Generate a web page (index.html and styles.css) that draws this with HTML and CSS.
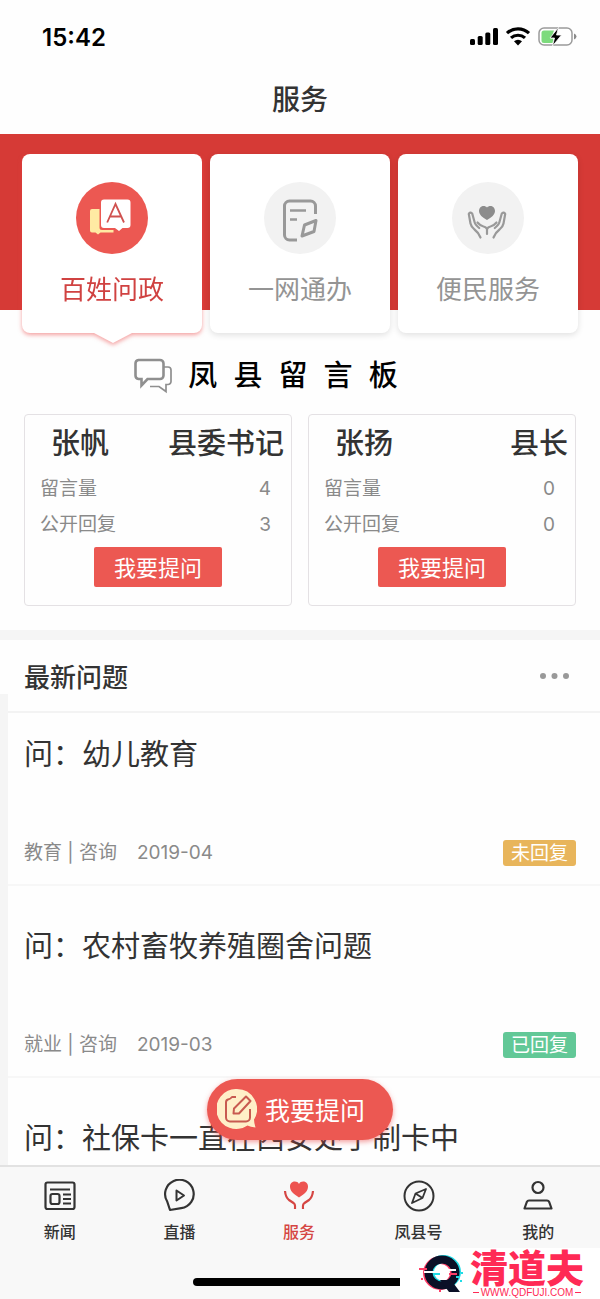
FILE: index.html
```html
<!DOCTYPE html>
<html lang="zh-CN">
<head>
<meta charset="utf-8">
<meta name="viewport" content="width=device-width, initial-scale=1">
<title>服务</title>
<link rel="stylesheet" href="styles.css">
</head>
<body>
<div class="app">
  <header class="top">
    <div class="status">
      <span class="time">15:42</span>
      <svg class="status-icons" width="108" height="22" viewBox="0 0 108 22" aria-hidden="true">
        <rect x="0" y="13" width="5" height="6" rx="1.500"/>
        <rect x="7.700" y="10" width="5" height="9" rx="1.500"/>
        <rect x="15.300" y="6.500" width="5" height="12.500" rx="1.500"/>
        <rect x="23" y="2" width="5" height="17" rx="1.500"/>
        <g fill="none" stroke="#000" stroke-width="3.200">
          <path d="M37 7.200a16 16 0 0 1 22 0"/>
          <path d="M41 11.900a10.500 10.500 0 0 1 14 0"/>
        </g>
        <path d="M44 15.300a6 6 0 0 1 8 0l-4 4.200z"/>
        <rect x="69" y="2" width="33" height="17" rx="5" fill="#fff" stroke="#9b9b9b" stroke-width="1.500"/>
        <path d="M74 4.500h10l-3 8h2.500l-1 4.500h-8.500a2.500 2.500 0 0 1-2.500-2.500v-7.500a2.500 2.500 0 0 1 2.500-2.500z" fill="#7ddb7d"/>
        <path d="M88.500 1.500l-8.500 10.500h4.500l-2 8 9-11h-5z" stroke="#fff" stroke-width=".8"/>
        <path d="M104 7.500q2.500 1 2.500 3t-2.500 3z" fill="#8a8a8a"/>
      </svg>
    </div>
    <h1 class="title">服务</h1>
  </header>

  <main class="content">
    <nav class="cards" aria-label="服务分类">
      <button class="card card-active" type="button">
        <svg class="card-icon" width="72" height="72" viewBox="0 0 72 72" aria-hidden="true">
          <circle cx="36" cy="36" r="36" fill="#ec5852"/>
          <path d="M16 27h7.500v18.500a2.500 2.500 0 0 0 2.500 2.500h11.500v2.500h-13l-2.500 2-2.500-2h-3.500a2 2 0 0 1-2-2v-19.500a2 2 0 0 1 2-2z" fill="#ffeaa3"/>
          <path d="M28 17.500h23.500a3 3 0 0 1 3 3v22.500a3 3 0 0 1-3 3h-5l-3.500 3-4-3h-11a3 3 0 0 1-3-3v-22.500a3 3 0 0 1 3-3z" fill="#fff"/>
          <path d="M31.200 40.500l8.300-18.500 8.500 18.500M34 34.500h11" fill="none" stroke="#d05250" stroke-width="1.800"/>
        </svg>
        <span>百姓问政</span>
      </button>
      <button class="card" type="button">
        <svg class="card-icon" width="72" height="72" viewBox="0 0 72 72" aria-hidden="true">
          <circle cx="36" cy="36" r="36" fill="#f2f2f2"/>
          <g fill="none" stroke="#999" stroke-width="3">
            <path d="M33 58h-7.500a5 5 0 0 1-5-5v-29a5 5 0 0 1 5-5h21a5 5 0 0 1 5 5v8"/>
            <path d="M26 28.500h16M26 37.500h7" stroke-width="2.400"/>
            <path d="M40.500 43l11.500-4.500-2 11-12 4.500z" stroke-linejoin="round" stroke-width="3"/>
          </g>
        </svg>
        <span>一网通办</span>
      </button>
      <button class="card" type="button">
        <svg class="card-icon" width="72" height="72" viewBox="0 0 72 72" aria-hidden="true">
          <circle cx="36" cy="36" r="36" fill="#f2f2f2"/>
          <path d="M35 38c-4.500-2.500-8-5.500-8-9 0-5 5.500-6.500 8-3.500 2.500-3 8-1.500 8 3.500 0 3.500-3.500 6.500-8 9z" fill="#8c8c8c"/>
          <g fill="none" stroke="#999" stroke-width="2.200" stroke-linejoin="round" stroke-linecap="round">
            <path d="M28.500 55.500q-2-5-6-8-3.500-3-4-6l-1.700-9.500q1.200-2.500 3.400-.5l2.500 9q.5 2 4.500 5.500"/>
            <path d="M35 52v-5q-1-2-3.500-2.500-3-.5-6-4"/>
            <path d="M41.500 55.500q2-5 6-8 3.500-3 4-6l1.700-9.500q-1.200-2.500-3.400-.5l-2.500 9q-.5 2-4.500 5.500"/>
            <path d="M35 47q1-2 3.500-2.500 3-.5 6-4"/>
          </g>
        </svg>
        <span>便民服务</span>
      </button>
    </nav>

    <h2 class="board-title">
      <svg width="38" height="36" viewBox="0 0 38 36" fill="none" stroke="#8f8f8f" aria-hidden="true">
        <path d="M4.500 2h21.500a3.500 3.500 0 0 1 3.500 3.500v12a3.500 3.500 0 0 1-3.500 3.500h-12.500l-6 6.500v-6.500h-3a3.500 3.500 0 0 1-3-3.500v-12a3.500 3.500 0 0 1 3-3.500z" stroke-width="2.600"/>
        <path d="M30 9h4a3 3 0 0 1 3 3v11.500a3 3 0 0 1-3 3h-2v7l-7-5h-9" stroke-width="1.700"/>
      </svg>
      <span class="board-name">凤  县  留  言  板</span>
    </h2>

    <section class="people">
      <article class="person">
        <h3 class="person-head"><span>张帆</span><span>县委书记</span></h3>
        <dl class="stats">
          <div class="stat"><dt>留言量</dt><dd>4</dd></div>
          <div class="stat"><dt>公开回复</dt><dd>3</dd></div>
        </dl>
        <button class="ask" type="button">我要提问</button>
      </article>
      <article class="person">
        <h3 class="person-head"><span>张扬</span><span>县长</span></h3>
        <dl class="stats">
          <div class="stat"><dt>留言量</dt><dd>0</dd></div>
          <div class="stat"><dt>公开回复</dt><dd>0</dd></div>
        </dl>
        <button class="ask" type="button">我要提问</button>
      </article>
    </section>

    <section class="latest">
      <div class="latest-head">
        <h2>最新问题</h2>
        <button class="more" type="button" aria-label="更多">
          <svg width="30" height="8" viewBox="0 0 30 8" fill="#999"><circle cx="4" cy="4" r="3"/><circle cx="15.500" cy="4" r="3"/><circle cx="27" cy="4" r="3"/></svg>
        </button>
      </div>
      <ul class="questions">
        <li class="question">
          <h3>问：幼儿教育</h3>
          <div class="meta"><span>教育 | 咨询</span><time>2019-04</time><span class="tag tag-wait">未回复</span></div>
        </li>
        <li class="question">
          <h3>问：农村畜牧养殖圈舍问题</h3>
          <div class="meta"><span>就业 | 咨询</span><time>2019-03</time><span class="tag tag-done">已回复</span></div>
        </li>
        <li class="question">
          <h3>问：社保卡一直在西安处于制卡中</h3>
        </li>
      </ul>
    </section>
  </main>

  <footer class="bottom">
    <button class="float-ask" type="button">
      <svg width="40" height="40" viewBox="0 0 40 40" aria-hidden="true">
        <path d="M20 0a20 20 0 0 1 17 30.500q0 3 1.500 8-5-.5-8-2a20 20 0 1 1-10.500-36.500z" fill="#ffefc8"/>
        <g fill="none" stroke="#c85a50" stroke-width="2" stroke-linejoin="round">
          <path d="M19 8h-4q-1.500 2-4 2.500-2 .5-2 3v15a4 4 0 0 0 4 4h16a4 4 0 0 0 4-4v-8.500"/>
          <path d="M29 7.500l4.500 4.500-11.500 12.500h-5.500l.5-5z"/>
        </g>
      </svg>
      <span>我要提问</span>
    </button>
    <nav class="tabs" aria-label="主导航">
      <a class="tab" href="#news">
        <svg width="34" height="34" viewBox="0 0 34 34" aria-hidden="true"><rect x="2.500" y="3.500" width="29" height="26.500" rx="2"/><path d="M7 10.500h20M20 15.500h8M20 20h8M20 24.500h8" stroke-width="1.800"/><rect x="7.500" y="15" width="9" height="10" rx="2"/></svg>
        <span>新闻</span>
      </a>
      <a class="tab" href="#live">
        <svg width="34" height="34" viewBox="0 0 34 34" aria-hidden="true"><path d="M8 31l-2.800-8.500a14.300 14.300 0 1 1 14 6.700z"/><path d="M14.500 11.500l7.500 5-7.500 5z" stroke-width="2"/></svg>
        <span>直播</span>
      </a>
      <a class="tab tab-active" href="#service" aria-current="page">
        <svg width="34" height="34" viewBox="0 0 34 34" aria-hidden="true"><path d="M17 18.500c-6-4-9-6.500-9-11 0-5.500 7-6.500 9-2.500 2-4 9-3 9 2.500 0 4.500-3 7-9 11z" fill="#ed5350" stroke="none"/><path d="M3 12q.5 6 4 9l4.500 3q2 1 1.500 6M31 12q-.5 6-4 9l-4.500 3q-2 1-1.500 6"/></svg>
        <span>服务</span>
      </a>
      <a class="tab" href="#channel">
        <svg width="34" height="34" viewBox="0 0 34 34" aria-hidden="true"><circle cx="17" cy="17" r="14.500" stroke-width="2"/><path d="M24 10l-3.500 9-10.500 5 3.500-9.500zM13.500 14.500l7 4.500" stroke-width="1.800"/></svg>
        <span>凤县号</span>
      </a>
      <a class="tab" href="#mine">
        <svg width="34" height="34" viewBox="0 0 34 34" aria-hidden="true"><circle cx="17" cy="8.500" r="5.500"/><path d="M8 21.500h18q1.500 0 2.200 1.500l2.300 6.500h-27l2.300-6.500q.7-1.500 2.200-1.500z"/></svg>
        <span>我的</span>
      </a>
    </nav>
    <div class="home-bar"></div>
    <div class="brand">
      <svg width="46" height="42" viewBox="0 0 46 42" fill="none" aria-hidden="true">
        <g stroke-width="8"><ellipse cx="22.500" cy="20" rx="13.500" ry="13" stroke="#ff3d67"/><ellipse cx="25.500" cy="19" rx="13.500" ry="13" stroke="#20dce6"/><ellipse cx="24" cy="19.500" rx="13.500" ry="13" stroke="#0b1027"/></g>
        <path d="M22 27h11l9 12h-11z" fill="#0b1027"/>
        <path d="M1 16h8M31 21h8" stroke="#ff3d67" stroke-width="2"/>
        <path d="M6 19h11M30 17h8" stroke="#fff" stroke-width="2"/>
        <path d="M16 21h6M38 24h3M43 20h2" stroke="#20dce6" stroke-width="2"/>
        <path d="M3 26h2M21 38h2" stroke="#ff3d67" stroke-width="2"/>
        <path d="M42 28h2" stroke="#20dce6" stroke-width="2"/>
      </svg>
      <div class="brand-text"><strong>清道夫</strong><small>WWW.QDFUJI.COM</small></div>
    </div>
  </footer>
</div>
</body>
</html>
```
FILE: styles.css
```css
* { box-sizing: border-box; }
body, h1, h2, h3, ul, dl, dd { margin: 0; padding: 0; }
body {
  background: #fefefe;
  color: #333;
  font-family: Inter, "Noto Sans CJK SC", sans-serif;
}
button {
  border: 0;
  padding: 0;
  background: none;
  color: inherit;
  font: inherit;
  cursor: pointer;
}
svg { display: block; flex: none; }

.app {
  display: flex;
  flex-direction: column;
  height: 100vh;
}

.status {
  display: flex;
  justify-content: space-between;
  align-items: center;
  height: 74px;
  padding: 0 22px 0 42px;
}
.time {
  color: #000;
  font-size: 24px;
  font-weight: 600;
}
.title {
  height: 60px;
  font-size: 28px;
  font-weight: 500;
  line-height: 52px;
  text-align: center;
}

.content {
  flex: 1;
  min-height: 0;
  overflow-y: auto;
  scrollbar-width: none;
}
.cards {
  display: grid;
  grid-template-columns: repeat(3, 1fr);
  gap: 8px;
  padding: 20px 22px 0;
  background: linear-gradient(#d63a36 176px, transparent 176px);
}
.card {
  display: flex;
  flex-direction: column;
  align-items: center;
  gap: 16px;
  height: 179px;
  padding-top: 28px;
  border-radius: 8px;
  background: #fff;
  box-shadow: 0 2px 6px rgba(0, 0, 0, .12);
  color: #949494;
  font-size: 26px;
  font-weight: 400;
  line-height: 40px;
}
.card-active {
  position: relative;
  box-shadow: none;
  filter: drop-shadow(0 2px 2px rgba(236, 70, 70, .5));
  color: #d04241;
}
.card-active::after {
  content: "";
  position: absolute;
  top: 100%;
  left: 50%;
  width: 38px;
  height: 10px;
  margin-left: -18px;
  background: #fff;
  clip-path: polygon(0 0, 100% 0, 50% 100%);
}

.board-title {
  display: flex;
  justify-content: center;
  align-items: center;
  gap: 16px;
  height: 81px;
  padding: 4px 68px 0 0;
  color: #000;
  font-size: 29px;
  font-weight: 500;
}
.board-name {
  font-family: "Liberation Sans", "Noto Sans CJK SC", sans-serif;
  line-height: 36px;
  white-space: pre;
}

.people {
  display: grid;
  grid-template-columns: 1fr 1fr;
  gap: 16px;
  padding: 0 24px 24px;
}
.person {
  height: 192px;
  border: 1px solid #e4e1e4;
  border-radius: 4px;
  text-align: center;
}
.person-head {
  display: flex;
  justify-content: space-between;
  padding: 7px 7px 5px 26px;
  font-size: 29px;
  font-weight: 500;
  line-height: 44px;
}
.stats {
  padding: 0 20px 0 15px;
  color: #8a8a8a;
  font-size: 19px;
  line-height: 36px;
}
.stat {
  display: flex;
  justify-content: space-between;
}
.ask {
  width: 128px;
  height: 40px;
  margin-top: 4px;
  padding-bottom: 2px;
  border-radius: 2px;
  background: #ec5852;
  color: #fff;
  font-size: 22px;
}

.latest { border-top: 10px solid #f5f5f5; }
.latest-head {
  display: flex;
  justify-content: space-between;
  align-items: center;
  height: 73px;
  padding: 0 31px 0 24px;
  border-bottom: 2px solid #f3f3f3;
}
.latest-head h2 {
  font-size: 26px;
  font-weight: 500;
}
.questions {
  margin-top: -19px;
  border-left: 8px solid #f5f5f5;
  list-style: none;
}
.question {
  display: flex;
  flex-direction: column;
  justify-content: space-between;
  height: 192px;
  padding: 38px 24px 18px 16px;
  border-bottom: 2px solid #f7f7f7;
}
.question h3 {
  font-size: 29px;
  font-weight: 400;
  line-height: 46px;
}
.meta {
  display: flex;
  align-items: center;
  gap: 20px;
  height: 26px;
  color: #8a8a8a;
  font-size: 19px;
  line-height: 28px;
}
.tag {
  height: 26px;
  margin-left: auto;
  padding: 0 8px;
  border-radius: 3px;
  color: #fff;
}
.tag-wait { background: #e8b55b; }
.tag-done { background: #62c897; }

.bottom {
  position: relative;
  height: 134px;
  border-top: 2px solid #e2e2e2;
  background: #f8f8f8;
}
.float-ask {
  position: absolute;
  bottom: 100%;
  left: 50%;
  display: flex;
  align-items: center;
  gap: 8px;
  width: 186px;
  height: 61px;
  margin: 0 0 27px -93px;
  padding: 0 0 2px 10px;
  border-radius: 31px;
  background: #ec5852;
  box-shadow: 0 2px 5px rgba(236, 70, 70, .5);
  color: #fff;
  font-size: 25px;
}
.tabs {
  display: grid;
  grid-template-columns: repeat(5, 1fr);
  padding: 12px 2px 0 0;
}
.tab {
  display: flex;
  flex-direction: column;
  align-items: center;
  gap: 7px;
  color: #333;
  font-size: 16px;
  font-weight: 500;
  line-height: 24px;
  text-decoration: none;
}
.tab svg {
  fill: none;
  stroke: currentColor;
  stroke-width: 2.2;
  stroke-linejoin: round;
}
.tab-active { color: #d54643; }
.home-bar {
  width: 214px;
  height: 8px;
  margin: 34px auto 0;
  border-radius: 4px;
  background: #000;
}
.brand {
  position: absolute;
  right: 0;
  bottom: 0;
  display: flex;
  align-items: center;
  gap: 6px;
  width: 200px;
  height: 51px;
  padding-left: 18px;
  background: #fff;
  color: #ff2a55;
}
.brand-text {
  display: flex;
  flex-direction: column;
  align-items: center;
}
.brand-text strong {
  font-size: 38px;
  font-weight: 900;
  line-height: 38px;
}
.brand-text small {
  display: flex;
  align-items: center;
  gap: 2px;
  font-family: "Liberation Sans", sans-serif;
  font-size: 10px;
  line-height: 12px;
}
.brand-text small::before,
.brand-text small::after {
  content: "";
  width: 6px;
  height: 1px;
  background: currentColor;
}
```
